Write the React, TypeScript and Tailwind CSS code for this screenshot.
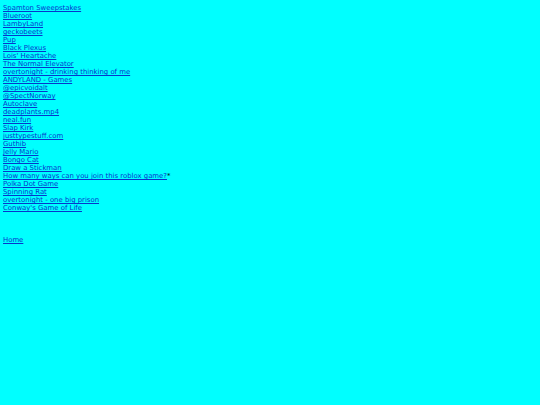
import React from "react";

const links = [
  "Spamton Sweepstakes",
  "Blueroot",
  "LambyLand",
  "geckobeets",
  "Pup",
  "Black Plexus",
  "Lois' Heartache",
  "The Normal Elevator",
  "overtonight - drinking thinking of me",
  "ANDYLAND - Games",
  "@epicvoidalt",
  "@SpectNorway",
  "Autoclave",
  "deadplants.mp4",
  "neal.fun",
  "Slap Kirk",
  "justtypestuff.com",
  "Guthib",
  "Jelly Mario",
  "Bongo Cat",
  "Draw a Stickman",
  "How many ways can you join this roblox game?",
  "Polka Dot Game",
  "Spinning Rat",
  "overtonight - one big prison",
  "Conway's Game of Life",
];

export default function App() {
  return (
    <div
      className="min-h-[405px] w-full bg-[#00ffff] px-[3px] pt-[4px] text-[6.9px] leading-[8px] text-black"
      style={{ fontFamily: '"DejaVu Sans", sans-serif' }}
    >
      <div className="flex flex-col items-start">
        {links.map((l, i) => (
          <div key={i} className="h-[8px] whitespace-nowrap">
            <a href="#" className="text-[#0836cc] underline">
              {l}
            </a>
            {i === 21 ? <span>*</span> : null}
          </div>
        ))}
      </div>
      <div className="mt-[24px] h-[8px]">
        <a href="#" className="text-[#0836cc] underline">
          Home
        </a>
      </div>
    </div>
  );
}
